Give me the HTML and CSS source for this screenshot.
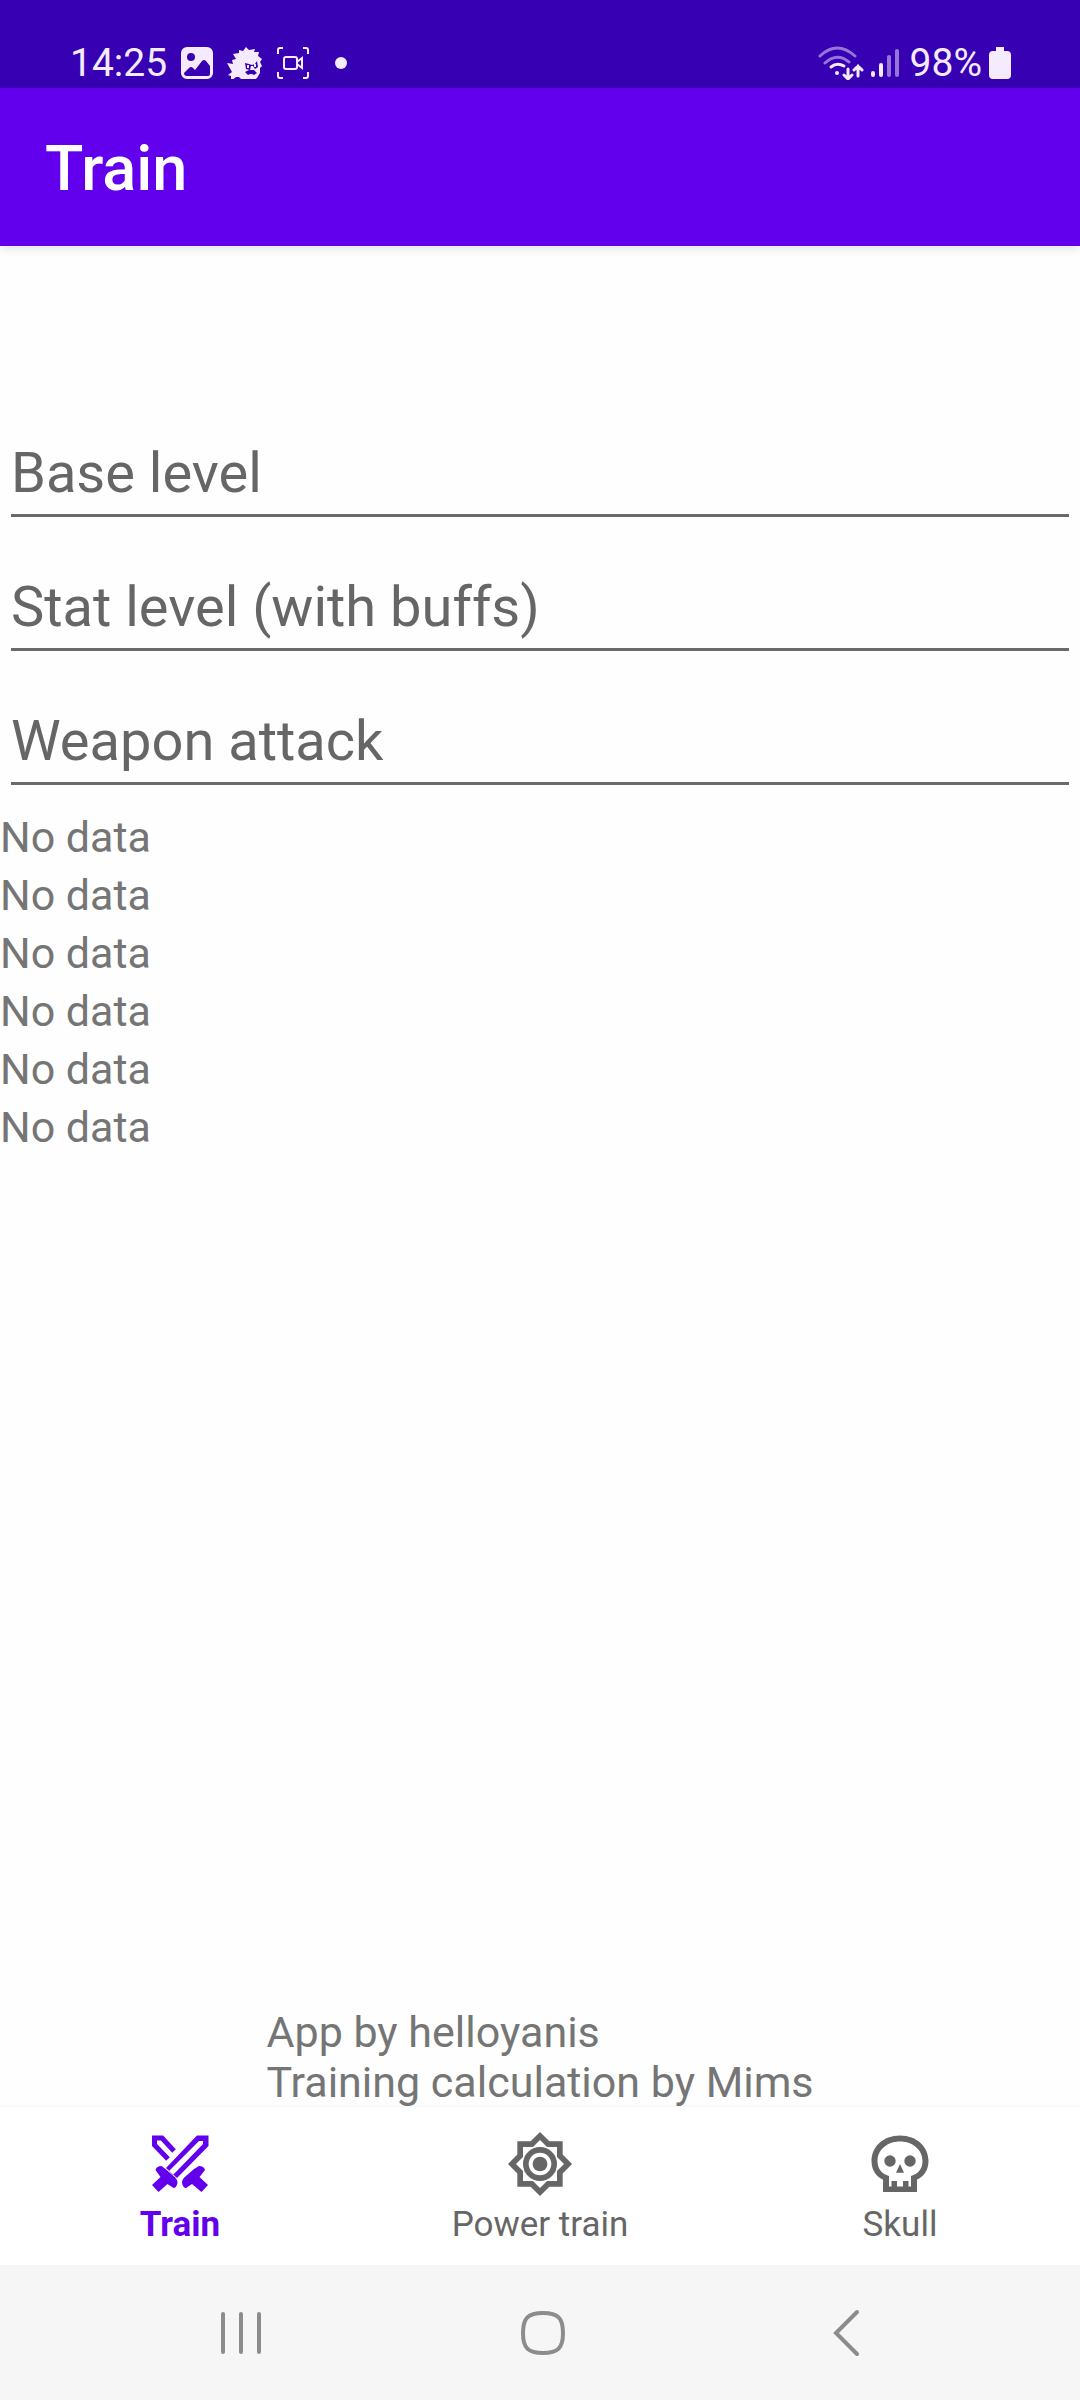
FILE: index.html
```html
<!DOCTYPE html>
<html lang="en">
<head>
<meta charset="utf-8">
<meta name="viewport" content="width=device-width, initial-scale=1">
<title>Train</title>
<link rel="stylesheet" href="styles.css">
</head>
<body>
<div class="status-bar">
  <div class="status-group">
    <span class="status-text">14:25</span>
    <svg class="status-icon" viewBox="0 0 32 32" aria-hidden="true">
      <path fill="currentColor" fill-rule="evenodd" d="M6 0h20a6 6 0 0 1 6 6v20a6 6 0 0 1-6 6H6a6 6 0 0 1-6-6V6a6 6 0 0 1 6-6zM10 6a4 4 0 1 0 0 8 4 4 0 0 0 0-8zM3 26l5-5q2-2 4 0l2 2 7-9q2-2 4 0l4 5v8q0 2-2 2H6q-3 0-3-3z"/>
    </svg>
    <svg class="mascot-icon" viewBox="0 0 36 32" aria-hidden="true">
      <path fill="currentColor" fill-rule="evenodd" d="M0 16l6 1-1-4 4-1-3-5 6-1 0-3 4 1 3-4 3 3 6-1-1 3 5 0-1 4 4 3-2 3 2 4-2 2 0 5-3 5-4 3-5 1-5-1-4-4-3 0-5 4 0-5-3-1 4-3zM18 16l1 6 4 1 1-4 2 0 2 3 3-2-1-6-2 3-3 1-3-1zM18 25l4-2h5l3 3-3 2q-3-2-6 0z"/>
      <path fill="currentColor" d="M20 18h2v3h-2zM27 17h2v3h-2z"/>
    </svg>
    <svg class="status-icon" viewBox="0 0 32 32" fill="none" stroke="currentColor" stroke-width="2" aria-hidden="true">
      <path d="M1 7V3q0-2 2-2h3M26 1h3q2 0 2 2v4M31 25v4q0 2-2 2h-3M6 31H3q-2 0-2-2v-4"/>
      <rect x="7" y="10" width="13" height="12" rx="2"/>
      <path d="M20 15l5-4v10l-5-4"/>
    </svg>
    <span class="status-dot"></span>
  </div>
  <div class="status-group status-group-end">
    <svg class="wifi-icon" viewBox="0 0 46 34" fill="none" stroke="currentColor" stroke-width="3" stroke-linecap="round" aria-hidden="true">
      <path opacity=".5" d="M2 10Q19-6 37 10M7 17Q19 6 31 16"/>
      <path d="M13 21Q19 16 26 20"/>
      <circle cx="19" cy="27" r="2" fill="currentColor" stroke="none"/>
      <path d="M30 23v9M26 29l4 4 4-4M40 30V20M36 24l4-4 4 4"/>
    </svg>
    <svg class="signal-icon" viewBox="0 0 28 30" stroke="currentColor" stroke-width="4" stroke-linecap="round" aria-hidden="true">
      <path d="M2 25v2M10 17v10"/>
      <path opacity=".5" d="M18 9v18M26 3v24"/>
    </svg>
    <span class="status-text">98%</span>
    <svg class="battery-icon" viewBox="0 0 22 32" aria-hidden="true">
      <path fill="currentColor" d="M7 0h8v4h3a4 4 0 0 1 4 4v20a4 4 0 0 1-4 4H4a4 4 0 0 1-4-4V8a4 4 0 0 1 4-4h3z"/>
    </svg>
  </div>
</div>

<header class="app-bar">
  <h1 class="app-title">Train</h1>
</header>

<main class="content">
  <form class="fields">
    <input class="field" type="text" placeholder="Base level" aria-label="Base level">
    <input class="field" type="text" placeholder="Stat level (with buffs)" aria-label="Stat level (with buffs)">
    <input class="field" type="text" placeholder="Weapon attack" aria-label="Weapon attack">
  </form>
  <div class="results">
    <p class="result">No data</p>
    <p class="result">No data</p>
    <p class="result">No data</p>
    <p class="result">No data</p>
    <p class="result">No data</p>
    <p class="result">No data</p>
  </div>
  <p class="credits">App by helloyanis<br>Training calculation by Mims</p>
</main>

<nav class="tabs" aria-label="Sections">
  <a class="tab tab-active" href="#train" aria-current="page">
    <svg class="tab-icon" viewBox="0 0 68 68" aria-hidden="true">
      <path fill="none" stroke="currentColor" stroke-width="5" d="M28 21L16 8H8.500v7L22 29"/>
      <path fill="currentColor" fill-rule="evenodd" d="M51 5.500h11.500V16L31 48 20 38zM53 11L23 41l4 4L57 14v-3z"/>
      <path fill="currentColor" d="M9.500 40q1-4 6-4l4 3 8 7q4 3 4 7-1 5-4 5l-6-4-9 8-6.500-7 8.500-8z"/>
      <path fill="currentColor" d="M59 40q-1-4-6-4l-5 3-8 7q-4 3-4 7 1 5 4 5l6-4 9.500 8 6.500-7-8.500-8z"/>
    </svg>
    <span class="tab-label">Train</span>
  </a>
  <a class="tab" href="#power-train">
    <svg class="tab-icon" viewBox="0 0 24 24" aria-hidden="true">
      <path fill="currentColor" fill-rule="evenodd" d="M20 8.690V4h-4.690L12 .690 8.690 4H4v4.690L.690 12 4 15.310V20h4.690L12 23.310 15.310 20H20v-4.690L23.310 12zM18 14.480V18h-3.520L12 20.480 9.520 18H6v-3.520L3.520 12 6 9.520V6h3.520L12 3.520 14.480 6H18v3.520L20.480 12z"/>
      <circle cx="12" cy="12" r="5" fill="none" stroke="currentColor" stroke-width="2"/>
      <circle cx="12" cy="12" r="2.600" fill="currentColor"/>
    </svg>
    <span class="tab-label">Power train</span>
  </a>
  <a class="tab" href="#skull">
    <svg class="tab-icon" viewBox="0 0 68 68" aria-hidden="true">
      <path fill="currentColor" fill-rule="evenodd" d="M34 5.500C51 5.500 62.500 17 62.500 31 62.500 41 57 47 51 49.500V62H17V49.500C11 47 5.500 41 5.500 31 5.500 17 17 5.500 34 5.500zM34 11.500C21 11.500 11.500 20 11.500 31 11.500 39 16 44 23 46V56.500H25.500V51H31V56.500H37V51H42.500V56.500H45V46C52 44 56.500 39 56.500 31 56.500 20 47 11.500 34 11.500z"/>
      <circle cx="24" cy="31" r="5.700" fill="currentColor"/>
      <circle cx="44" cy="31" r="5.700" fill="currentColor"/>
      <path fill="currentColor" d="M34 34l4 8.700h-8z"/>
    </svg>
    <span class="tab-label">Skull</span>
  </a>
</nav>

<div class="system-nav">
  <button class="system-button" type="button" aria-label="Recent apps">
    <svg class="system-icon" viewBox="0 0 48 48" aria-hidden="true"><path d="M6 5v38M24 5v38M42 5v38"/></svg>
  </button>
  <button class="system-button" type="button" aria-label="Home">
    <svg class="system-icon" viewBox="0 0 48 48" aria-hidden="true"><path d="M24 4C39 4 44 9 44 24S39 44 24 44 4 39 4 24 9 4 24 4z"/></svg>
  </button>
  <button class="system-button" type="button" aria-label="Back">
    <svg class="system-icon" viewBox="0 0 48 48" aria-hidden="true"><path d="M36 3L15 24l21 21"/></svg>
  </button>
</div>
</body>
</html>
```
FILE: styles.css
```css
* {
  box-sizing: border-box;
}

body {
  display: flex;
  flex-direction: column;
  min-height: 100vh;
  margin: 0;
  background: #fefefe;
  color: #757575;
  font-family: Roboto, "Liberation Sans", sans-serif;
}

h1,
p {
  margin: 0;
}

svg {
  display: block;
  flex: none;
}

.status-bar {
  display: flex;
  justify-content: space-between;
  align-items: center;
  height: 88px;
  padding: 37px 69px 0 70px;
  background: #3700b3;
  color: #f5ebff;
}

.status-group {
  display: flex;
  align-items: center;
  gap: 14px;
}

.status-group-end {
  gap: 7px;
}

.status-text {
  font-size: 39px;
  line-height: 48px;
}

.status-icon {
  width: 32px;
  height: 32px;
}

.mascot-icon {
  width: 36px;
  height: 32px;
}

.status-dot {
  width: 12px;
  height: 12px;
  margin-left: 12px;
  border-radius: 50%;
  background: currentColor;
}

.wifi-icon {
  width: 46px;
  height: 34px;
}

.signal-icon {
  width: 28px;
  height: 30px;
  margin-right: 4px;
}

.battery-icon {
  width: 22px;
  height: 32px;
}

.app-bar {
  display: flex;
  align-items: center;
  height: 158px;
  padding: 4px 45px 0;
  background: #6200ee;
  box-shadow: 0 2px 10px rgba(0, 0, 0, 0.12);
  color: #fff;
}

.app-title {
  font-size: 63px;
  font-weight: 500;
  line-height: 72px;
}

.content {
  display: flex;
  flex: 1;
  flex-direction: column;
  padding-top: 158px;
}

.fields {
  display: flex;
  flex-direction: column;
  gap: 21px;
  padding: 0 11px;
}

.field {
  width: 100%;
  height: 113px;
  margin: 0;
  padding: 34px 0 6px;
  border: 0;
  border-bottom: 3px solid #6a6a6a;
  border-radius: 0;
  outline: 0;
  background: transparent;
  color: #212121;
  font-family: inherit;
  font-size: 56px;
}

.field::placeholder {
  color: #666;
  opacity: 1;
}

.results {
  padding-top: 23px;
}

.result {
  font-size: 43px;
  line-height: 58px;
}

.credits {
  align-self: center;
  margin-top: auto;
  font-size: 43px;
  line-height: 50px;
}

.tabs {
  display: grid;
  grid-template-columns: repeat(3, 1fr);
  height: 158px;
  background: #fff;
  box-shadow: 0 0 4px rgba(0, 0, 0, 0.06);
}

.tab {
  display: flex;
  flex-direction: column;
  align-items: center;
  gap: 7px;
  padding-top: 23px;
  color: #666;
  text-decoration: none;
}

.tab-active {
  color: #6200ee;
  font-weight: 700;
}

.tab-icon {
  width: 68px;
  height: 68px;
}

.tab-label {
  font-size: 35px;
  line-height: 40px;
}

.system-nav {
  display: grid;
  grid-template-columns: repeat(3, 1fr);
  height: 135px;
  padding: 0 84px 0 90px;
  background: #f6f6f6;
}

.system-button {
  display: flex;
  align-items: center;
  justify-content: center;
  padding: 0;
  border: 0;
  background: none;
  color: #8c8c8c;
}

.system-icon {
  width: 48px;
  height: 48px;
  fill: none;
  stroke: currentColor;
  stroke-width: 4;
  stroke-linecap: round;
}
```
